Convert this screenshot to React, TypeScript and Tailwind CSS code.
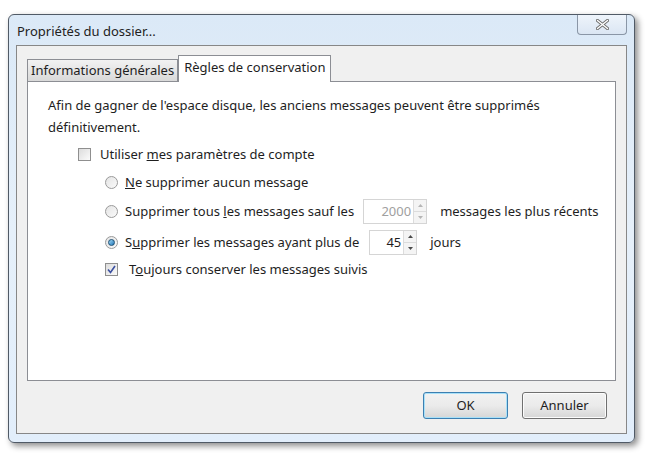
import React from "react";

const font = { fontFamily: '"Noto Sans", "Open Sans", sans-serif' };

const Radio: React.FC<{ checked?: boolean }> = ({ checked }) => (
  <span className="flex h-[13px] w-[13px] items-center justify-center rounded-full border border-[#9a9a9a] bg-gradient-to-br from-[#e4e4e4] to-[#fafafa]">
    {checked && (
      <span className="h-[7px] w-[7px] rounded-full border border-[#1c4f74] bg-gradient-to-br from-[#9fd8f5] to-[#1b78b8]" />
    )}
  </span>
);

const Check: React.FC<{ checked?: boolean }> = ({ checked }) => (
  <span className="flex h-[13px] w-[13px] items-center justify-center border border-[#8f8f8f] bg-gradient-to-br from-[#dcdcdc] to-[#fbfbfb]">
    {checked && (
      <svg width="9" height="9" viewBox="0 0 9 9">
        <path d="M1 4.5 L3.5 7.5 L8 1" fill="none" stroke="#3a4fa0" strokeWidth="1.6" />
      </svg>
    )}
  </span>
);

const Spinner: React.FC<{ value: string; width: string; disabled?: boolean }> = ({ value, width, disabled }) => (
  <div className={`flex h-[25px] items-stretch border border-[#d5d5d5] bg-white ${width}`}>
    <span className={`flex flex-1 items-center justify-end pr-[2px] ${disabled ? "text-[#a0a0a0]" : "text-[#1e1e1e]"}`}>{value}</span>
    <span className="flex w-[13px] flex-col border-l border-[#dcdcdc]">
      <span className="flex flex-1 items-center justify-center border-b border-[#dcdcdc] bg-[#f4f4f4]">
        <svg width="5" height="3" viewBox="0 0 5 3"><path d="M0 3 L2.5 0 L5 3 Z" fill={disabled ? "#b5b5b5" : "#4a4a4a"} /></svg>
      </span>
      <span className="flex flex-1 items-center justify-center bg-[#f4f4f4]">
        <svg width="5" height="3" viewBox="0 0 5 3"><path d="M0 0 L2.5 3 L5 0 Z" fill={disabled ? "#b5b5b5" : "#4a4a4a"} /></svg>
      </span>
    </span>
  </div>
);

export default function App() {
  return (
    <div className="h-[457px] w-[649px] bg-white pl-[8px] pt-[14px] text-[13px] text-[#1e1e1e]" style={font}>
      <div className="flex h-[429px] w-[627px] flex-col rounded-[6px] border border-[#505a66] bg-gradient-to-b from-[#dbe9f7] via-[#e6f0fa] to-[#e2eefb] px-[7px] pb-[8px] shadow-[3px_3px_6px_rgba(0,0,0,0.45)]">
        <div className="flex h-[30px] items-start justify-between">
          <span className="pl-[1px] pt-[7px] text-[13px] text-[#222]">Propriétés du dossier...</span>
          <span className="flex h-[20px] w-[50px] items-center justify-center rounded-b-[4px] border border-t-0 border-[#8a96a6] bg-gradient-to-b from-[#eef4fb] to-[#dbe6f3]">
            <svg width="13" height="11" viewBox="0 0 13 11">
              <path d="M1.5 1.5 L11.5 9.5 M11.5 1.5 L1.5 9.5" stroke="#6e6e6e" strokeWidth="3.2" strokeLinecap="round" />
              <path d="M1.5 1.5 L11.5 9.5 M11.5 1.5 L1.5 9.5" stroke="#ffffff" strokeWidth="1.4" strokeLinecap="round" />
            </svg>
          </span>
        </div>
        <div className="flex flex-1 flex-col border border-[#878787] bg-[#f0f0f0] px-[10px] pt-[9px]">
          <div className="flex items-end">
            <div className="flex h-[22px] items-center border border-b-0 border-[#8c8e94] bg-gradient-to-b from-[#f2f2f2] to-[#d9d9d9] px-[3px]">
              Informations générales
            </div>
            <div className="relative -mb-px flex h-[27px] items-center border border-b-0 border-[#8c8e94] bg-white px-[5px] pb-[3px]">
              Règles de conservation
            </div>
          </div>
          <div className="flex h-[300px] flex-col border border-[#8c8e94] bg-white pl-[20px] pt-[12px]">
            <p className="leading-[22px]">
              Afin de gagner de l'espace disque, les anciens messages peuvent être supprimés
              <br />
              définitivement.
            </p>
            <div className="mt-[7px] flex items-center gap-[9px] pl-[30px]">
              <Check />
              <span>Utiliser <u>m</u>es paramètres de compte</span>
            </div>
            <div className="mt-[8px] flex items-center gap-[7px] pl-[57px]">
              <Radio />
              <span><u>N</u>e supprimer aucun message</span>
            </div>
            <div className="mt-[7px] flex items-center pl-[57px]">
              <Radio />
              <span className="ml-[7px]">Supprimer tous <u>l</u>es messages sauf les</span>
              <span className="ml-[9px]"><Spinner value="2000" width="w-[64px]" disabled /></span>
              <span className="ml-[13px]">messages les plus récents</span>
            </div>
            <div className="mt-[6px] flex items-center pl-[57px]">
              <Radio checked />
              <span className="ml-[7px]">S<u>u</u>pprimer les messages ayant plus de</span>
              <span className="ml-[10px]"><Spinner value="45" width="w-[48px]" /></span>
              <span className="ml-[13px]">jours</span>
            </div>
            <div className="mt-[5px] flex items-center gap-[11px] pl-[57px]">
              <Check checked />
              <span>T<u>o</u>ujours conserver les messages suivis</span>
            </div>
          </div>
          <div className="mt-[11px] flex justify-end gap-[14px] pr-[9px]">
            <button className="h-[27px] w-[85px] rounded-[3px] border border-[#3c7fb1] bg-gradient-to-b from-[#f2f2f2] via-[#ebebeb] to-[#d6d6d6] shadow-[inset_0_0_0_1px_#a8e0f8]">OK</button>
            <button className="h-[27px] w-[85px] rounded-[3px] border border-[#707070] bg-gradient-to-b from-[#f2f2f2] via-[#ebebeb] to-[#d6d6d6] shadow-[inset_0_0_0_1px_#fcfcfc]">Annuler</button>
          </div>
        </div>
      </div>
    </div>
  );
}
